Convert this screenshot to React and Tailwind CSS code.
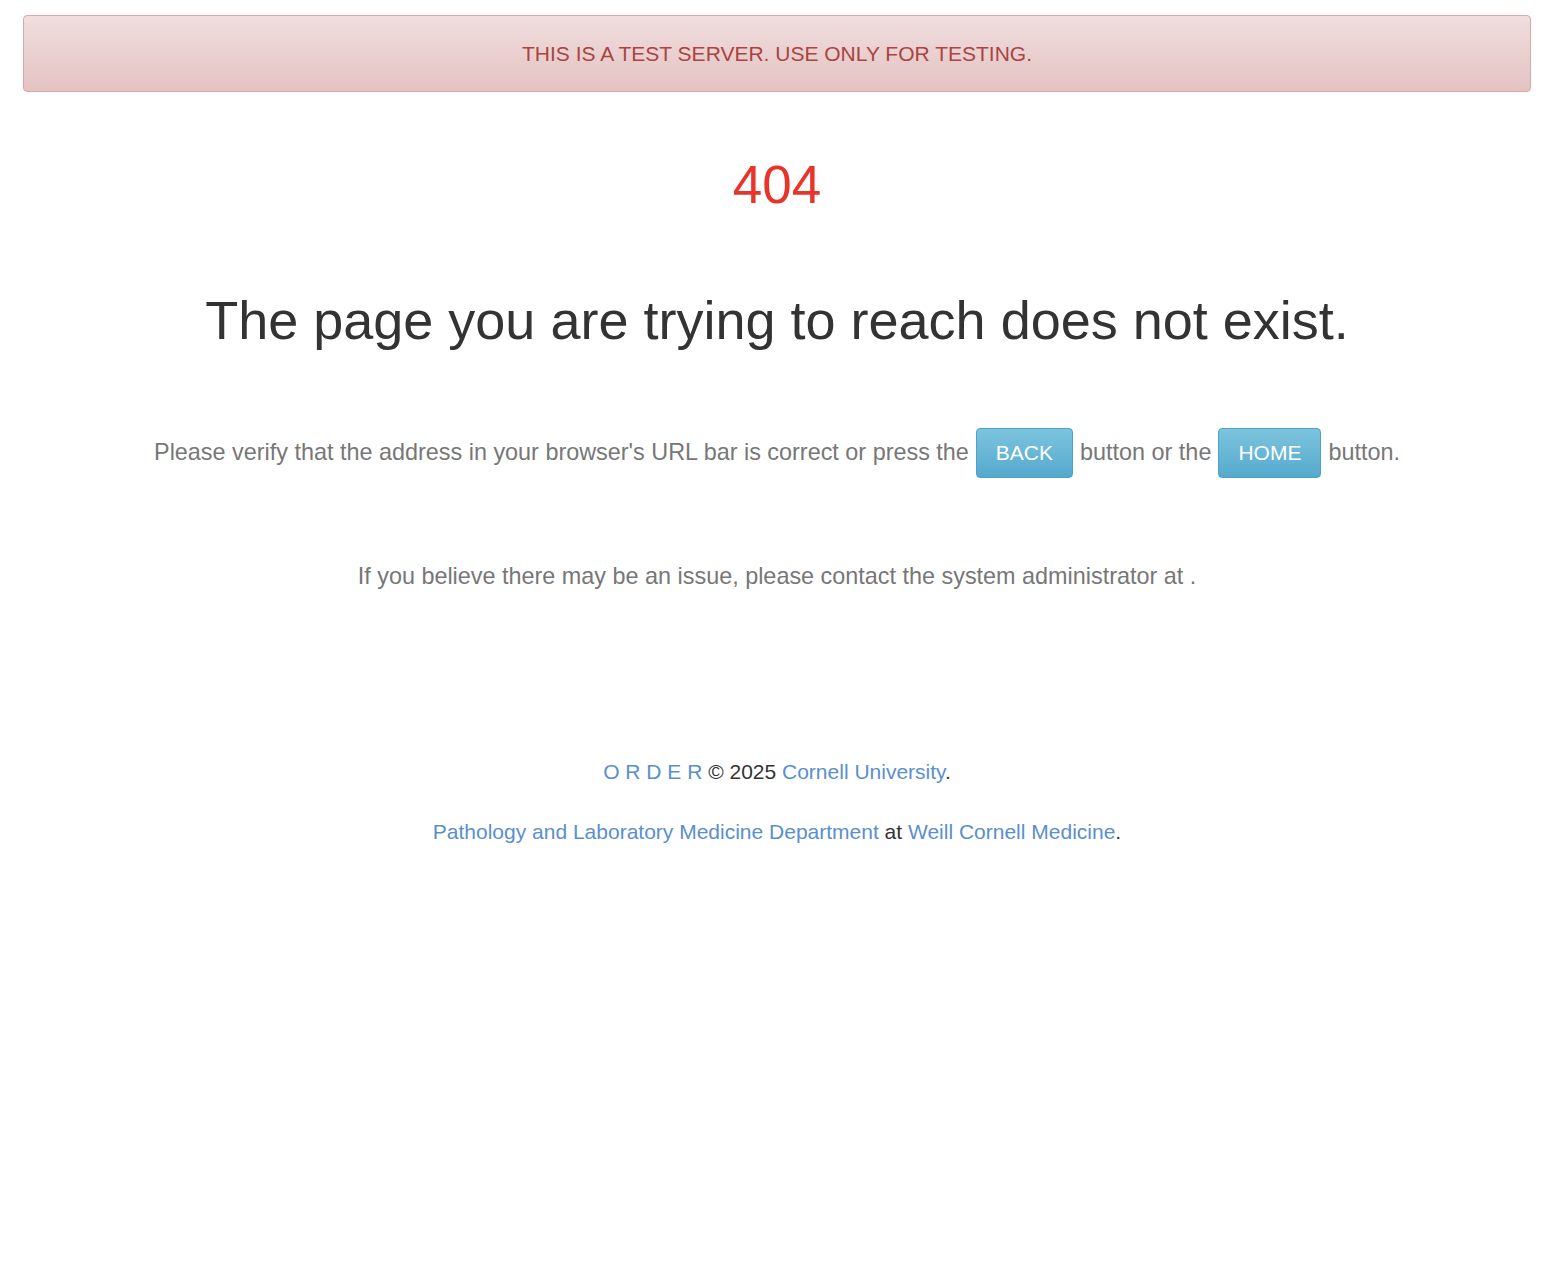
export default function App() {
  return (
    <div className="min-h-screen bg-white font-['Liberation_Sans',Arial,sans-serif] text-[#333]">
      <div className="px-[23px] pt-[15px]">
        <div className="flex h-[77px] items-center justify-center rounded border border-[#dca7a7] bg-gradient-to-b from-[#f0dede] to-[#e4c2c2] text-[21px] text-[#a94442]">
          THIS IS A TEST SERVER. USE ONLY FOR TESTING.
        </div>
      </div>

      <div className="flex flex-col items-center text-center">
        <h1 className="mt-[66px] text-[53px] leading-none text-[#e8352a]">404</h1>
        <h2 className="mt-[82px] text-[54px] leading-none">The page you are trying to reach does not exist.</h2>

        <p className="mt-[81px] flex items-center gap-[7px] text-[23.4px] text-[#777]">
          <span>Please verify that the address in your browser's URL bar is correct or press the</span>
          <button className="h-[50px] rounded border border-[#4aa3c9] bg-gradient-to-b from-[#7cc4de] to-[#55a9ce] px-[19px] text-[21px] text-white">
            BACK
          </button>
          <span>button or the</span>
          <button className="h-[50px] rounded border border-[#4aa3c9] bg-gradient-to-b from-[#7cc4de] to-[#55a9ce] px-[19px] text-[21px] text-white">
            HOME
          </button>
          <span>button.</span>
        </p>

        <p className="mt-[81px] text-[23.4px] text-[#777]">
          If you believe there may be an issue, please contact the system administrator at .
        </p>

        <div className="mt-[162px] text-[21px]">
          <p>
            <a className="text-[#5a8fcf]">O R D E R</a> © 2025{' '}
            <a className="text-[#5a8fcf]">Cornell University</a>.
          </p>
          <p className="mt-[28px]">
            <a className="text-[#5a8fcf]">Pathology and Laboratory Medicine Department</a> at{' '}
            <a className="text-[#5a8fcf]">Weill Cornell Medicine</a>.
          </p>
        </div>
      </div>
    </div>
  );
}
